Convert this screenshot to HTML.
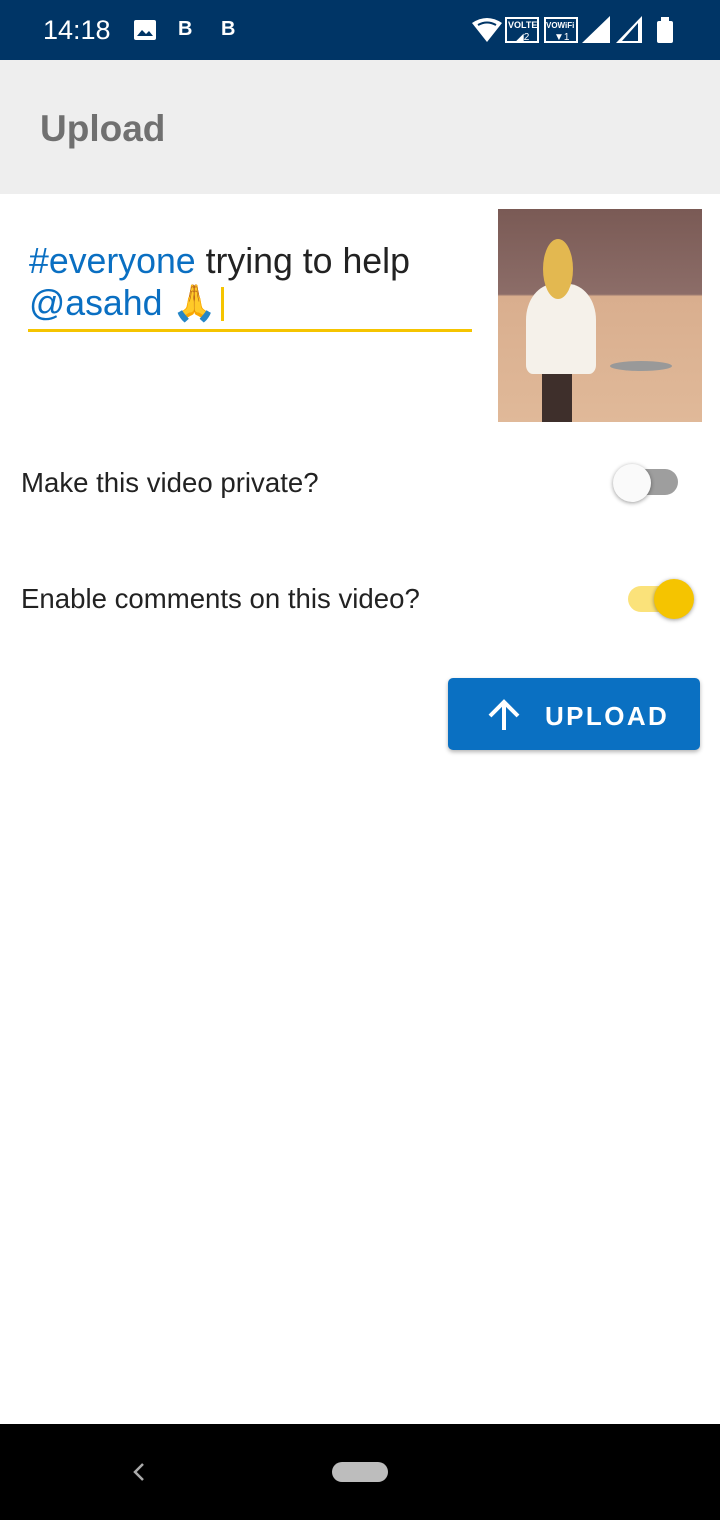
<!DOCTYPE html>
<html><head><meta charset="utf-8"><style>
*{margin:0;padding:0;box-sizing:border-box}
body{width:720px;height:1520px;background:#fff;font-family:"Liberation Sans",Roboto,sans-serif;position:relative;overflow:hidden}
.sb{position:absolute;top:0;left:0;width:720px;height:60px;background:#003566;color:#fff}
.ab{position:absolute;top:60px;left:0;width:720px;height:134px;background:#eeeeee}
.ab span{position:absolute;left:40px;top:48px;font-size:37px;font-weight:bold;color:#707070}
.txt{position:absolute;left:29px;top:240px;font-size:35.7px;line-height:42px;color:#222}
.b{color:#0a6fc2}
.ul{position:absolute;left:28px;top:329px;width:444px;height:3px;background:#f5c400}
.lbl{position:absolute;left:21px;font-size:27.6px;color:#222}
.nav{position:absolute;top:1424px;left:0;width:720px;height:96px;background:#000}
</style></head><body>
<div class="sb">
<div style="position:absolute;left:43px;top:15px;font-size:27px">14:18</div>
<svg style="position:absolute;left:133px;top:19px" width="24" height="22"><rect x="1" y="1" width="22" height="20" rx="2" fill="#fff"/><path d="M4 17l5-6 4 4 3-3 4 5z" fill="#003566"/></svg>
<div style="position:absolute;left:178px;top:18px;font-size:20px;font-weight:bold">B</div>
<div style="position:absolute;left:221px;top:18px;font-size:20px;font-weight:bold">B</div>
<svg style="position:absolute;left:470px;top:15px" width="215" height="30">
<path d="M2 8 Q17 -2 32 8 L17 27Z" fill="#fff"/><path d="M8 10 Q17 5 26 10" stroke="#003566" stroke-width="2" fill="none"/>
<rect x="36" y="3" width="32" height="24" fill="none" stroke="#fff" stroke-width="2"/><text x="38" y="13" font-size="9" fill="#fff" font-weight="bold">VOLTE</text><text x="46" y="25" font-size="10" fill="#fff">◢2</text>
<rect x="75" y="3" width="32" height="24" fill="none" stroke="#fff" stroke-width="2"/><text x="76" y="13" font-size="8" fill="#fff" font-weight="bold">VOWiFi</text><text x="84" y="25" font-size="10" fill="#fff">▼1</text>
<path d="M112 28L140 1V28Z" fill="#fff"/><path d="M146 28L172 1V28Z M152 26H168V8Z" fill="#fff" fill-rule="evenodd"/>
<rect x="187" y="6" width="16" height="22" rx="2" fill="#fff"/><rect x="191" y="2" width="8" height="4" fill="#fff"/>
</svg>
</div>
<div class="ab"><span>Upload</span></div>
<div class="txt"><span class="b">#everyone</span> trying to help<br><span class="b">@asahd</span> 🙏<span style="display:inline-block;width:3px;height:34px;background:#f5c400;vertical-align:-6px;margin-left:4px"></span></div>
<div class="ul"></div>
<div style="position:absolute;left:498px;top:209px;width:204px;height:213px;background:linear-gradient(#7a5a55 0,#8c6d68 40%,#d9ae8e 41%,#e0b999 100%)">
<div style="position:absolute;left:28px;top:75px;width:70px;height:90px;background:#f5f1ea;border-radius:40% 40% 10% 10%"></div>
<div style="position:absolute;left:45px;top:30px;width:30px;height:60px;background:#e3b850;border-radius:50%"></div>
<div style="position:absolute;left:44px;top:165px;width:30px;height:48px;background:#3e2f2b"></div>
<div style="position:absolute;left:112px;top:152px;width:62px;height:10px;background:#999;border-radius:50%"></div>
</div>
<div class="lbl" style="top:467px">Make this video private?</div>
<div style="position:absolute;left:616px;top:469px;width:62px;height:26px;border-radius:13px;background:#9e9e9e"></div>
<div style="position:absolute;left:613px;top:464px;width:38px;height:38px;border-radius:50%;background:#fafafa;box-shadow:0 1px 4px rgba(0,0,0,.4)"></div>
<div class="lbl" style="top:583px">Enable comments on this video?</div>
<div style="position:absolute;left:628px;top:586px;width:62px;height:26px;border-radius:13px;background:#fbe27a"></div>
<div style="position:absolute;left:654px;top:579px;width:40px;height:40px;border-radius:50%;background:#f5c400;box-shadow:0 1px 4px rgba(0,0,0,.4)"></div>
<div style="position:absolute;left:448px;top:678px;width:252px;height:72px;background:#0a70c2;border-radius:5px;box-shadow:0 2px 4px rgba(0,0,0,.3);color:#fff">
<svg style="position:absolute;left:38px;top:20px" width="36" height="34"><path d="M18 32V4M4 18L18 4 32 18" stroke="#fff" stroke-width="4" fill="none"/></svg>
<div style="position:absolute;left:97px;top:23px;font-size:26px;font-weight:bold;letter-spacing:2.4px">UPLOAD</div>
</div>
<div class="nav">
<svg style="position:absolute;left:130px;top:37px" width="18" height="22"><path d="M13 3L5 11l8 8" stroke="#aaa" stroke-width="2.5" fill="none"/></svg>
<div style="position:absolute;left:332px;top:38px;width:56px;height:20px;border-radius:10px;background:#bdbdbd"></div>
</div>
</body></html>
